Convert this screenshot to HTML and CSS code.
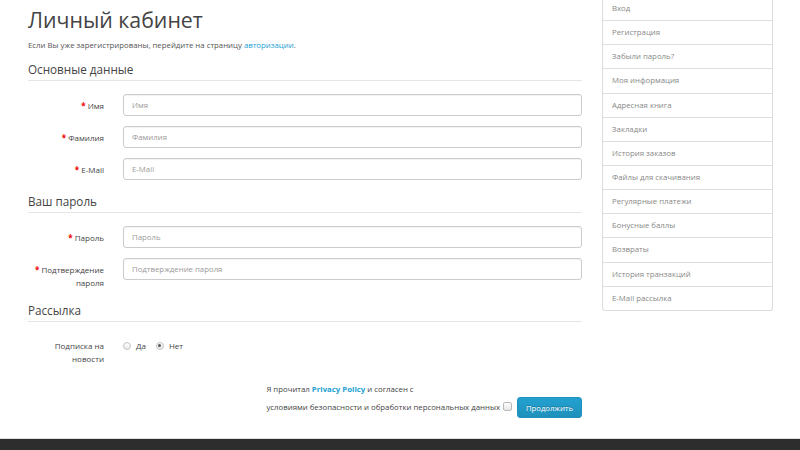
FILE: index.html
```html
<!DOCTYPE html>
<html lang="ru">
<head>
<meta charset="utf-8">
<title>Личный кабинет</title>
<link rel="stylesheet" href="styles.css">
</head>
<body>

<div class="page">

  <div class="content">

    <h1 class="title">Личный кабинет</h1>
    <p class="intro">Если Вы уже зарегистрированы, перейдите на страницу <a href="#">авторизации</a>.</p>

    <form class="register">

      <div class="section">
        <div class="section-title">Основные данные</div>
        <div class="row">
          <label class="row-label required" for="f-name">Имя</label>
          <input class="field" id="f-name" type="text" placeholder="Имя">
        </div>
        <div class="row">
          <label class="row-label required" for="f-lastname">Фамилия</label>
          <input class="field" id="f-lastname" type="text" placeholder="Фамилия">
        </div>
        <div class="row">
          <label class="row-label required" for="f-email">E-Mail</label>
          <input class="field" id="f-email" type="text" placeholder="E-Mail">
        </div>
      </div>

      <div class="section">
        <div class="section-title">Ваш пароль</div>
        <div class="row">
          <label class="row-label required" for="f-pass">Пароль</label>
          <input class="field" id="f-pass" type="password" placeholder="Пароль">
        </div>
        <div class="row">
          <label class="row-label required" for="f-confirm">Подтверждение пароля</label>
          <input class="field" id="f-confirm" type="password" placeholder="Подтверждение пароля">
        </div>
      </div>

      <div class="section">
        <div class="section-title">Рассылка</div>
        <div class="row">
          <div class="row-label">Подписка на новости</div>
          <div class="radios">
            <label class="radio"><span class="radio-dot"></span>Да</label>
            <label class="radio"><span class="radio-dot checked"></span>Нет</label>
          </div>
        </div>
      </div>

      <div class="buttons">
        <div class="agree">
          Я прочитал <a href="#"><b>Privacy Policy</b></a> и согласен с<br>
          условиями безопасности и обработки персональных данных <span class="check"></span>
        </div>
        <button class="btn" type="button">Продолжить</button>
      </div>

    </form>

  </div>

  <div class="sidebar">
    <a class="side-item" href="#">Вход</a>
    <a class="side-item" href="#">Регистрация</a>
    <a class="side-item" href="#">Забыли пароль?</a>
    <a class="side-item" href="#">Моя информация</a>
    <a class="side-item" href="#">Адресная книга</a>
    <a class="side-item" href="#">Закладки</a>
    <a class="side-item" href="#">История заказов</a>
    <a class="side-item" href="#">Файлы для скачивания</a>
    <a class="side-item" href="#">Регулярные платежи</a>
    <a class="side-item" href="#">Бонусные баллы</a>
    <a class="side-item" href="#">Возвраты</a>
    <a class="side-item" href="#">История транзакций</a>
    <a class="side-item" href="#">E-Mail рассылка</a>
  </div>

</div>

<div class="footer"></div>

</body>
</html>
```

FILE: styles.css
```css
/* account / register page */

body
{
margin: 0;
background-color: #FFFFFF;
font-family: "Open Sans", "DejaVu Sans", sans-serif;
font-size: 8px;
color: #666666;
overflow: hidden;
}

a
{
color: #23A1D1;
text-decoration: none;
}

.page
{
display: flex;
align-items: flex-start;
gap: 20px;
padding-left: 28px;
height: 438px;
}

.content
{
width: 554px;
}

.title
{
margin: 5px 0 0 0;
font-size: 21.3px;
line-height: 30px;
font-weight: normal;
color: #444444;
}

.intro
{
margin: 4px 0 0 0;
font-size: 7.8px;
line-height: 13px;
color: #555555;
}

.register
{
display: flex;
flex-direction: column;
margin-top: 8px;
}

.section
{
display: flex;
flex-direction: column;
margin-bottom: 2px;
}

.section-title
{
font-size: 11.7px;
line-height: 19px;
color: #444444;
padding-bottom: 1px;
border-bottom: 1px solid #E5E5E5;
margin-bottom: 13px;
}

.row
{
display: flex;
align-items: flex-start;
gap: 19px;
margin-bottom: 10px;
}

.row-label
{
width: 76px;
flex: none;
text-align: right;
line-height: 13px;
padding-top: 4.5px;
color: #444444;
}

.required::before
{
content: "* ";
color: #F00000;
font-weight: bold;
}

.field
{
flex: 1;
height: 22px;
box-sizing: border-box;
margin: 0;
padding: 0 8px;
border: 1px solid #CCCCCC;
border-radius: 3px;
font-family: inherit;
font-size: 7.8px;
color: #555555;
box-shadow: inset 0 1px 1px rgba(0, 0, 0, 0.05);
}

.field::placeholder
{
color: #999999;
}

.radios
{
display: flex;
gap: 10px;
padding-top: 4.5px;
line-height: 13px;
color: #444444;
}

.radio
{
display: flex;
align-items: center;
gap: 5px;
}

.radio-dot
{
width: 8px;
height: 8px;
border: 1px solid #C4C4C4;
border-radius: 50%;
background: linear-gradient(#FFFFFF, #E8E8E8);
box-sizing: border-box;
display: flex;
align-items: center;
justify-content: center;
}

.radio-dot.checked::after
{
content: "";
width: 3px;
height: 3px;
border-radius: 50%;
background-color: #555555;
}

.buttons
{
display: flex;
justify-content: flex-end;
align-items: flex-start;
margin-top: 3px;
}

.agree
{
flex: none;
font-size: 7.8px;
line-height: 18px;
color: #444444;
}

.agree b
{
font-weight: bold;
}

.check
{
display: inline-block;
width: 9px;
height: 9px;
box-sizing: border-box;
border: 1px solid #BBBBBB;
border-radius: 2px;
background: linear-gradient(#FFFFFF, #E6E6E6);
vertical-align: -1px;
margin-left: 1px;
}

.btn
{
margin: 17px 0 0 5px;
width: 65px;
height: 21px;
padding: 0;
border: 1px solid #1F90BB;
border-radius: 3px;
background: linear-gradient(#23A1D1, #1F90BB);
color: #FFFFFF;
font-family: inherit;
font-size: 7.7px;
text-shadow: 0 -1px 0 rgba(0, 0, 0, 0.25);
}

.sidebar
{
width: 171px;
box-sizing: border-box;
margin-top: -4px;
border: 1px solid #DDDDDD;
border-top: none;
border-radius: 0 0 3px 3px;
}

.side-item
{
display: block;
height: 24.15px;
box-sizing: border-box;
padding: 0 9px;
line-height: 23px;
border-top: 1px solid #DDDDDD;
font-size: 7.8px;
color: #888888;
}

.footer
{
height: 60px;
border-top: 1px solid #DDDDDD;
background-color: #2D2D2D;
}
```
